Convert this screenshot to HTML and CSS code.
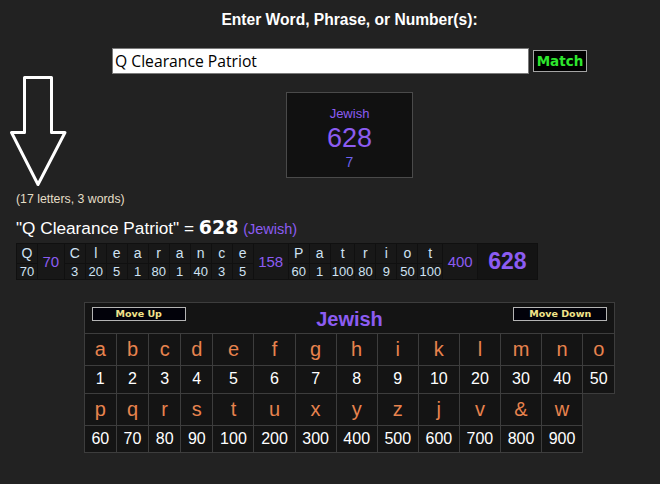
FILE: index.html
```html
<!DOCTYPE html>
<html lang="en">
<head>
<meta charset="utf-8">
<title>Gematria</title>
<link rel="stylesheet" href="styles.css">
</head>
<body>
<div class="page">
  <div class="centered">
    <h1 class="title">Enter Word, Phrase, or Number(s):</h1>
    <form class="entry">
      <input class="phrase" type="text" value="Q Clearance Patriot">
      <button class="match" type="button">Match</button>
    </form>
  </div>
  <div class="mid">
    <div class="pointer">
      <svg class="arrow" viewBox="0 0 64 116" aria-hidden="true"><polygon points="18.5,3.5 45.5,3.5 45.5,58.5 59,58.5 32,110.5 5.5,58.5 18.5,58.5" fill="none" stroke="#fff" stroke-width="3" stroke-linejoin="round"/></svg>
      <div class="count">(17 letters, 3 words)</div>
    </div>
    <div class="result">
      <div class="result-cipher">Jewish</div>
      <div class="result-value">628</div>
      <div class="result-reduced">7</div>
    </div>
  </div>
  <div class="formula">"Q Clearance Patriot" = <span class="formula-total">628</span> <span class="formula-cipher">(Jewish)</span></div>
  <table class="breakdown">
    <tr class="b-letters">
      <td>Q</td><td class="sum" rowspan="2">70</td>
      <td>C</td><td>l</td><td>e</td><td>a</td><td>r</td><td>a</td><td>n</td><td>c</td><td>e</td><td class="sum" rowspan="2">158</td>
      <td>P</td><td>a</td><td>t</td><td>r</td><td>i</td><td>o</td><td>t</td><td class="sum" rowspan="2">400</td>
      <td class="total" rowspan="2">628</td>
    </tr>
    <tr class="b-values">
      <td>70</td>
      <td>3</td><td>20</td><td>5</td><td>1</td><td>80</td><td>1</td><td>40</td><td>3</td><td>5</td>
      <td>60</td><td>1</td><td>100</td><td>80</td><td>9</td><td>50</td><td>100</td>
    </tr>
  </table>
  <div class="centered">
    <table class="cipher">
      <tr>
        <th class="cipher-head" colspan="14">
          <div class="cipher-bar">
            <button class="move" type="button">Move Up</button>
            <span class="cipher-name">Jewish</span>
            <button class="move" type="button">Move Down</button>
          </div>
        </th>
      </tr>
      <tr class="letter"><td>a</td><td>b</td><td>c</td><td>d</td><td>e</td><td>f</td><td>g</td><td>h</td><td>i</td><td>k</td><td>l</td><td>m</td><td>n</td><td>o</td></tr>
      <tr class="num"><td>1</td><td>2</td><td>3</td><td>4</td><td>5</td><td>6</td><td>7</td><td>8</td><td>9</td><td>10</td><td>20</td><td>30</td><td>40</td><td>50</td></tr>
      <tr class="letter"><td>p</td><td>q</td><td>r</td><td>s</td><td>t</td><td>u</td><td>x</td><td>y</td><td>z</td><td>j</td><td>v</td><td>&amp;</td><td>w</td></tr>
      <tr class="num"><td>60</td><td>70</td><td>80</td><td>90</td><td>100</td><td>200</td><td>300</td><td>400</td><td>500</td><td>600</td><td>700</td><td>800</td><td>900</td></tr>
    </table>
  </div>
</div>
</body>
</html>
```

FILE: styles.css
```css
* { box-sizing: border-box; }
html, body { margin: 0; background: #222222; }
body {
  color: #ffffff;
  font-family: "Liberation Sans", Arial, sans-serif;
}
.page { width: 660px; padding-top: 11px; }
.centered { padding-left: 39px; }

.title {
  margin: 0;
  text-align: center;
  font: bold 15.6px/18px "Liberation Sans", Arial, sans-serif;
  color: #ffffff;
  white-space: nowrap;
}

.entry {
  display: flex;
  justify-content: center;
  align-items: center;
  gap: 4px;
  margin: 19px 0 0;
}
.phrase {
  width: 417px;
  height: 26px;
  border: 1px solid #7a7a7a;
  background: #ffffff;
  padding: 0 2px;
  font: 15.7px "Open Sans", sans-serif;
  color: #000000;
  outline: none;
}
.match {
  width: 54px;
  height: 22px;
  border: 1px solid #a4a4a4;
  background: #000000;
  color: #2ee62e;
  font: bold 13.5px/18px "DejaVu Sans", sans-serif;
  padding: 0;
}

.mid {
  display: grid;
  grid-template-columns: 286px auto;
}
.pointer { padding-left: 6px; }
.arrow { display: block; width: 64px; height: 116px; }
.count {
  margin: 2px 0 0 10px;
  font: 12.3px/14px "Liberation Sans", Arial, sans-serif;
  color: #e4dec6;
  white-space: nowrap;
}
.result {
  align-self: start;
  margin-top: 18px;
  width: 127px;
  height: 86px;
  border: 1px solid #4a4a4a;
  background: #111111;
  display: flex;
  flex-direction: column;
  align-items: center;
  padding-top: 13px;
  color: #8c5cf2;
}
.result-cipher { font-size: 13px; line-height: 15px; }
.result-value { font-size: 27px; line-height: 31px; margin-top: 2px; }
.result-reduced { font-size: 14px; line-height: 16px; color: #6e62f0; }

.formula {
  margin: 10px 0 0 16px;
  height: 22px;
  font-size: 17.2px;
  line-height: 22px;
  color: #ffffff;
  white-space: nowrap;
}
.formula-total { font: bold 19px/22px "DejaVu Sans", sans-serif; }
.formula-cipher { font-size: 14.5px; color: #8c5cf2; }

.breakdown {
  margin: 5px 0 0 16px;
  border-collapse: collapse;
  background: #181818;
}
.breakdown td {
  box-sizing: content-box;
  width: 18px;
  padding: 0 1px;
  border: 1px solid #101010;
  text-align: center;
  color: #cfe2f3;
}
.b-letters td { font-size: 14px; line-height: 19px; }
.b-values td { font-size: 13px; line-height: 15px; }
.breakdown td.sum {
  width: auto;
  padding: 0 4.5px;
  font-size: 15px;
  color: #8c5cf2;
  vertical-align: middle;
}
.breakdown td.total {
  width: auto;
  padding: 0 10px;
  font: bold 23px "Liberation Sans", Arial, sans-serif;
  color: #8c5cf2;
  background: #141414;
  vertical-align: middle;
}

.cipher {
  margin: 22px auto 0;
  border-collapse: collapse;
}
.cipher th, .cipher td {
  border: 1px solid #3d3d3d;
  background: #141414;
  text-align: center;
  padding: 4px 6.7px;
}
.cipher th.cipher-head { padding: 4px 7px 2px; }
.cipher-bar {
  display: flex;
  justify-content: space-between;
  align-items: flex-start;
}
.cipher-name {
  margin-top: 1px;
  font: bold 20px/23px "Liberation Sans", Arial, sans-serif;
  color: #8c5cf2;
}
.move {
  width: 94px;
  height: 14px;
  border: 1px solid #b4b4b4;
  background: #02020a;
  color: #f2e48a;
  font: bold 9.5px/12px "DejaVu Sans", sans-serif;
  padding: 0;
}
.letter td { font-size: 20px; line-height: 23px; color: #e8834e; }
.num td { font-size: 16px; line-height: 18.5px; color: #ffffff; }
```
